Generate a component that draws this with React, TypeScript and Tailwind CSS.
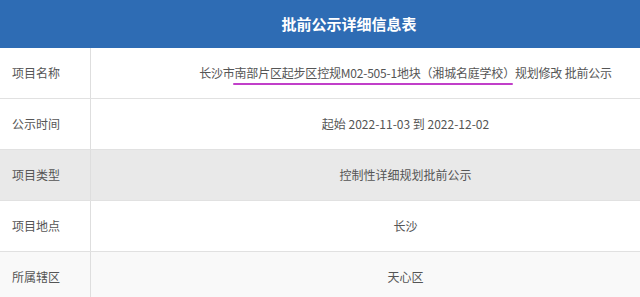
const rows = [
  { label: "项目名称", value: null as string | null, bg: "bg-white" },
  { label: "公示时间", value: "起始 2022-11-03 到 2022-12-02", bg: "bg-white" },
  { label: "项目类型", value: "控制性详细规划批前公示", bg: "bg-[#e9e9e9]" },
  { label: "项目地点", value: "长沙", bg: "bg-white" },
  { label: "所属辖区", value: "天心区", bg: "bg-[#f9f9f9]" },
];

const NameValue = () => (
  <span className="tracking-[-0.2px]">
    长沙市
    <span className="relative">
      南部片区起步区控规M02-505-1地块（湘城名庭学校）
      <span className="absolute left-[-2px] right-[2px] bottom-[-4px] h-[2px] rounded-full bg-[#c13fc9]" />
    </span>
    规划修改 批前公示
  </span>
);

export default function App() {
  return (
    <div
      className="h-[297px] w-[640px] overflow-hidden bg-white text-[12px] text-[#555]"
      style={{ fontFamily: '"Noto Sans CJK SC", "Noto Sans", sans-serif' }}
    >
      {/* Title bar */}
      <div className="flex h-[48px] items-center justify-center bg-[#2e6cb4] pl-[58px] text-[15px] font-bold text-white">
        批前公示详细信息表
      </div>

      {rows.map((row, i) => (
        <div
          key={i}
          className={`flex h-[51px] border-b border-[#e1e1e1] ${row.bg}`}
        >
          <div className="flex w-[91px] shrink-0 items-center border-r border-[#dedede] pl-[12px]">
            {row.label}
          </div>
          <div className="flex flex-1 items-center justify-center pl-[80px]">
            {row.value === null ? <NameValue /> : row.value}
          </div>
        </div>
      ))}
    </div>
  );
}
